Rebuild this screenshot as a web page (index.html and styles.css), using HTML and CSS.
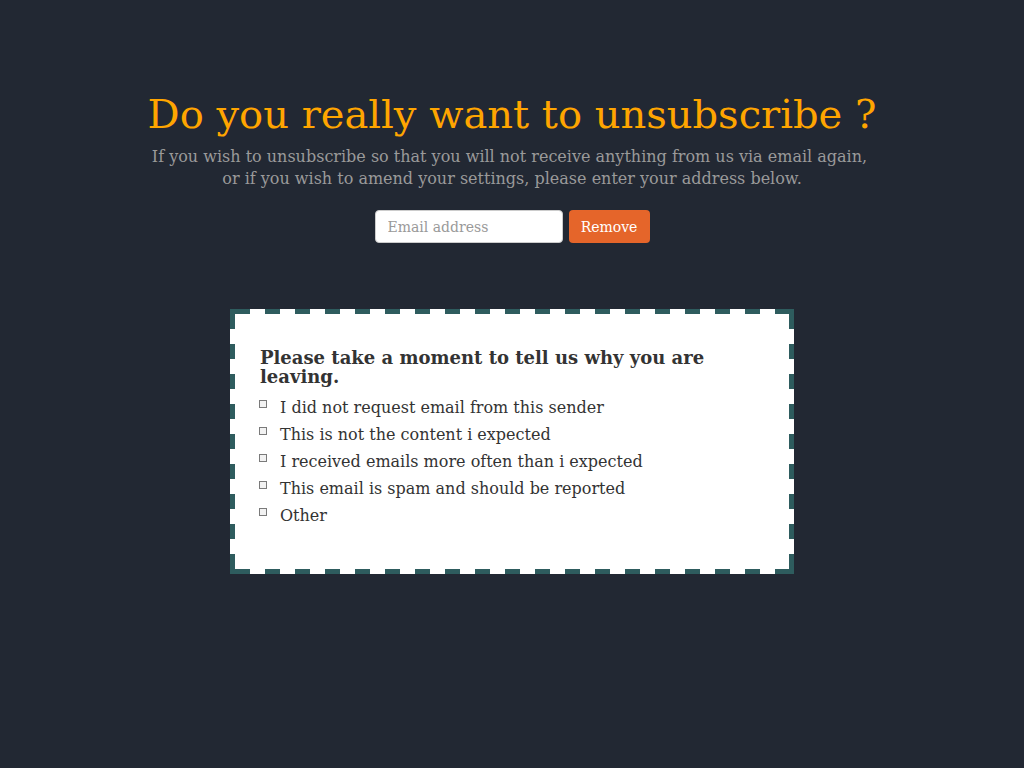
FILE: index.html
```html
<!DOCTYPE html>
<html>
<head>
<meta charset="utf-8">
<link rel="stylesheet" href="styles.css">
</head>
<body>
<div class="page">
  <h1 class="title">Do you really want to unsubscribe ?</h1>
  <p class="lead">If you wish to unsubscribe so that you will not receive anything from us via email again,&nbsp;<br>or if you wish to amend your settings, please enter your address below.</p>
  <form class="form">
    <input class="email" type="text" placeholder="Email address">
    <button class="remove" type="button">Remove</button>
  </form>
  <div class="reasons">
    <h2 class="reasons-title">Please take a moment to tell us why you are leaving.</h2>
    <ul class="list">
      <li class="item"><span class="box"></span>I did not request email from this sender</li>
      <li class="item"><span class="box"></span>This is not the content i expected</li>
      <li class="item"><span class="box"></span>I received emails more often than i expected</li>
      <li class="item"><span class="box"></span>This email is spam and should be reported</li>
      <li class="item"><span class="box"></span>Other</li>
    </ul>
  </div>
</div>
</body>
</html>
```
FILE: styles.css
```css
html, body {
  margin: 0;
  padding: 0;
  background: #222833;
  font-family: "DejaVu Serif", serif;
}
.page {
  display: flex;
  flex-direction: column;
  align-items: center;
  padding-top: 90px;
}
.title {
  margin: 0;
  color: #ffa500;
  font-size: 40px;
  font-weight: normal;
  line-height: 48px;
}
.lead {
  margin: 8px 0 0;
  color: #9a9a9a;
  font-size: 16px;
  line-height: 22px;
  text-align: center;
}
.form {
  display: flex;
  gap: 6px;
  margin-top: 20px;
}
.email {
  box-sizing: border-box;
  width: 188px;
  height: 33px;
  border: 1px solid #ccc;
  border-radius: 4px;
  padding: 0 12px;
  font-family: "DejaVu Serif", serif;
  font-size: 14px;
  color: #555;
  background: #fff;
}
.email::placeholder { color: #999; }
.remove {
  box-sizing: border-box;
  width: 81px;
  height: 33px;
  border: none;
  border-radius: 4px;
  background: #e5652a;
  color: #fff;
  font-family: "DejaVu Serif", serif;
  font-size: 14px;
  padding: 0;
}
.reasons {
  --dash: #2e5c5e;
  box-sizing: border-box;
  width: 564px;
  margin-top: 66px;
  padding: 39px 30px 45px;
  background:
    linear-gradient(var(--dash), var(--dash)) left top / 5px 5px no-repeat,
    linear-gradient(var(--dash), var(--dash)) right top / 5px 5px no-repeat,
    linear-gradient(var(--dash), var(--dash)) left bottom / 5px 5px no-repeat,
    linear-gradient(var(--dash), var(--dash)) right bottom / 5px 5px no-repeat,
    repeating-linear-gradient(to right, transparent 0 5px, var(--dash) 5px 20px, transparent 20px 30px) left top / 100% 5px no-repeat,
    repeating-linear-gradient(to right, transparent 0 5px, var(--dash) 5px 20px, transparent 20px 30px) left bottom / 100% 5px no-repeat,
    repeating-linear-gradient(to bottom, transparent 0 5px, var(--dash) 5px 20px, transparent 20px 30px) left top / 5px 100% no-repeat,
    repeating-linear-gradient(to bottom, transparent 0 5px, var(--dash) 5px 20px, transparent 20px 30px) right top / 5px 100% no-repeat,
    #fff;
}
.reasons-title {
  margin: 0 0 8px;
  font-size: 18px;
  line-height: 19px;
  font-weight: bold;
  color: #333;
}
.list {
  list-style: none;
  margin: 0;
  padding: 0;
}
.item {
  display: flex;
  align-items: center;
  height: 27px;
  font-size: 16px;
  color: #333;
}
.box {
  box-sizing: border-box;
  width: 8px;
  height: 8px;
  border: 1px solid #7a7a7a;
  background: #f2f2f2;
  margin: -7px 13px 0 -1px;
}
```
